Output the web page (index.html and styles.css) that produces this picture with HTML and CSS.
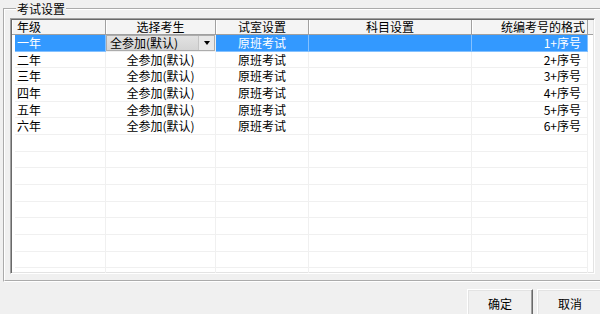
FILE: index.html
```html
<!DOCTYPE html>
<html lang="zh-CN">
<head>
  <meta charset="UTF-8" />
  <title>考试设置</title>
  <link rel="stylesheet" href="styles.css">
</head>
<body>
  <fieldset class="group">
    <legend>考试设置</legend>

    <div class="grid">
      <div class="grid-head">
        <div class="hcell left">年级</div>
        <div class="hcell">选择考生</div>
        <div class="hcell">试室设置</div>
        <div class="hcell">科目设置</div>
        <div class="hcell right">统编考号的格式</div>
      </div>

      <div class="grid-row selected">
        <div class="cell first">一年</div>
        <div class="cell editor">
          <div class="combo">
            <span class="combo-text">全参加(默认)</span>
            <span class="combo-btn"></span>
          </div>
        </div>
        <div class="cell center">原班考试</div>
        <div class="cell"></div>
        <div class="cell num">1+序号</div>
      </div>
      <div class="grid-row">
        <div class="cell first">二年</div>
        <div class="cell center">全参加(默认)</div>
        <div class="cell center">原班考试</div>
        <div class="cell"></div>
        <div class="cell num">2+序号</div>
      </div>
      <div class="grid-row">
        <div class="cell first">三年</div>
        <div class="cell center">全参加(默认)</div>
        <div class="cell center">原班考试</div>
        <div class="cell"></div>
        <div class="cell num">3+序号</div>
      </div>
      <div class="grid-row">
        <div class="cell first">四年</div>
        <div class="cell center">全参加(默认)</div>
        <div class="cell center">原班考试</div>
        <div class="cell"></div>
        <div class="cell num">4+序号</div>
      </div>
      <div class="grid-row">
        <div class="cell first">五年</div>
        <div class="cell center">全参加(默认)</div>
        <div class="cell center">原班考试</div>
        <div class="cell"></div>
        <div class="cell num">5+序号</div>
      </div>
      <div class="grid-row">
        <div class="cell first">六年</div>
        <div class="cell center">全参加(默认)</div>
        <div class="cell center">原班考试</div>
        <div class="cell"></div>
        <div class="cell num">6+序号</div>
      </div>

      <!-- 空行 -->
      <div class="grid-row"><div class="cell first"></div><div class="cell"></div><div class="cell"></div><div class="cell"></div><div class="cell"></div></div>
      <div class="grid-row"><div class="cell first"></div><div class="cell"></div><div class="cell"></div><div class="cell"></div><div class="cell"></div></div>
      <div class="grid-row"><div class="cell first"></div><div class="cell"></div><div class="cell"></div><div class="cell"></div><div class="cell"></div></div>
      <div class="grid-row"><div class="cell first"></div><div class="cell"></div><div class="cell"></div><div class="cell"></div><div class="cell"></div></div>
      <div class="grid-row"><div class="cell first"></div><div class="cell"></div><div class="cell"></div><div class="cell"></div><div class="cell"></div></div>
      <div class="grid-row"><div class="cell first"></div><div class="cell"></div><div class="cell"></div><div class="cell"></div><div class="cell"></div></div>
      <div class="grid-row"><div class="cell first"></div><div class="cell"></div><div class="cell"></div><div class="cell"></div><div class="cell"></div></div>
      <div class="grid-row"><div class="cell first"></div><div class="cell"></div><div class="cell"></div><div class="cell"></div><div class="cell"></div></div>
      <div class="grid-row"><div class="cell first"></div><div class="cell"></div><div class="cell"></div><div class="cell"></div><div class="cell"></div></div>
    </div>
  </fieldset>

  <div class="actions">
    <button class="btn">确定</button>
    <button class="btn">取消</button>
  </div>
</body>
</html>
```

FILE: styles.css
```css
html, body {
  overflow: hidden;
}
body {
  margin: 0;
  height: 314px;
  background: #f0f0f0;
  color: #000;
  font-family: "Noto Sans CJK SC", "Liberation Sans", sans-serif;
  font-size: 12px;
}

/* 分组框 */
.group {
  margin: 2px -8px 0 3px;
  padding: 0 0 6px 5px;
  border: 2px groove #fff;
  min-width: 0;
}
.group legend {
  margin-left: 6px;
  padding: 0 1px;
  line-height: 14px;
}

/* 表格 */
.grid {
  margin-top: 2px;
  width: 585px;
  height: 256px;
  box-sizing: border-box;
  background: #fff;
  border: 1px solid;
  border-color: #a0a0a0 #fff #fff #a0a0a0;
  box-shadow: inset 1px 1px 0 #696969, inset -1px -1px 0 #e3e3e3;
  padding: 1px 1px 0 1px;
  overflow: hidden;
}
.grid-head, .grid-row {
  display: grid;
  grid-template-columns: 94px 110px 93px 163px 116px;
}
.grid-head {
  height: 15px;
  background: #f4f4f4;
  border-bottom: 1px solid #a0a0a0;
  box-sizing: border-box;
}
.hcell {
  line-height: 14px;
  text-align: center;
  border-right: 1px solid #a0a0a0;
  box-shadow: inset 1px 0 0 #fff;
  white-space: nowrap;
}
.hcell.left {
  text-align: left;
  padding-left: 5px;
}
.hcell.right {
  text-align: right;
  padding-right: 2px;
}

.grid-row {
  height: 16.67px;
}
.cell {
  line-height: 16px;
  border-right: 1px solid #f0f0f0;
  border-bottom: 1px solid #f0f0f0;
  white-space: nowrap;
  overflow: hidden;
}
.cell.first {
  margin-left: 3px;
  padding-left: 2px;
}
.cell.center {
  text-align: center;
}
.cell.num {
  text-align: right;
  padding-right: 6px;
}
.selected .cell {
  background: #3399ff;
  color: #fff;
  border-color: #84c1ff;
}
.selected .cell.editor {
  background: #fff;
  border-right-color: #f0f0f0;
  border-bottom-color: #f0f0f0;
}

/* 下拉框 */
.combo {
  display: flex;
  height: 100%;
  box-sizing: border-box;
  background: linear-gradient(#e2e2e2, #d4d4d4);
  border: 1px solid #acacac;
  color: #000;
}
.combo-text {
  padding-left: 3px;
  line-height: 14px;
}
.combo-btn {
  margin-left: auto;
  width: 15px;
  display: flex;
  align-items: center;
  justify-content: center;
  background: #e8e8e8;
  border-left: 1px solid #c4c4c4;
}
.combo-btn::before {
  content: "";
  border-left: 3px solid transparent;
  border-right: 3px solid transparent;
  border-top: 4px solid #000;
}

/* 按钮 */
.actions {
  display: flex;
  justify-content: flex-end;
  gap: 4px;
  margin: 7px -3px 0 0;
}
.btn {
  width: 66px;
  height: 28px;
  padding: 0;
  font: inherit;
  color: #000;
  background: #f0f0f0;
  border: 1px solid;
  border-color: #fff #696969 #696969 #fff;
  box-shadow: inset -1px -1px 0 #a0a0a0, inset 1px 1px 0 #e3e3e3;
}
```
